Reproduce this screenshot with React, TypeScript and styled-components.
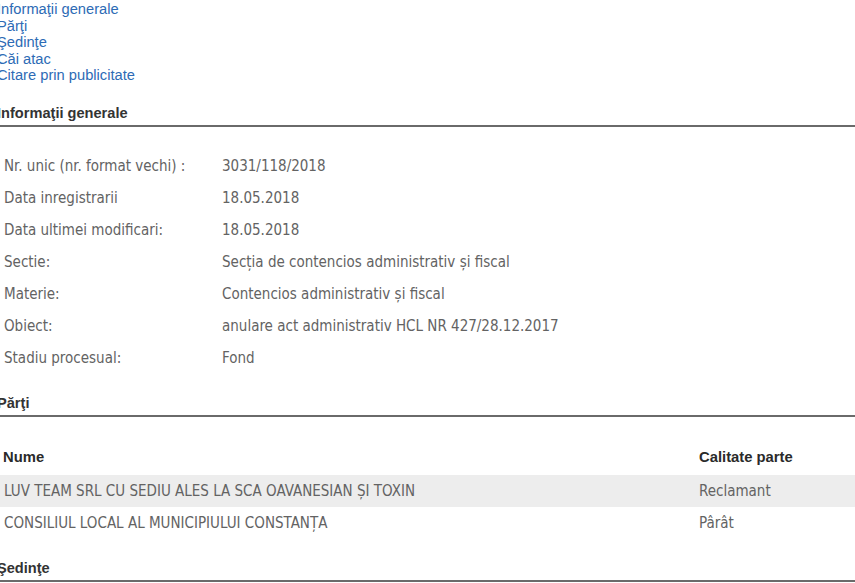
import React from "react";
import styled, { createGlobalStyle } from "styled-components";

const Global = createGlobalStyle`
  html, body { margin: 0; padding: 0; background: #fff; }
  body { font-family: "Liberation Sans", Arial, sans-serif; overflow: hidden; }
`;

const Page = styled.div`
  margin-left: -3px;
  padding-top: 1px;
  width: 860px;
`;

const Nav = styled.nav`
  display: flex;
  flex-direction: column;
`;

const NavLink = styled.a`
  font-family: "Liberation Sans", Arial, sans-serif;
  font-size: 14.7px;
  line-height: 16.5px;
  color: #2d6bb5;
  text-decoration: none;
`;

const SectionTitle = styled.h2<{ $gap: number }>`
  margin: ${(p) => p.$gap}px 0 0;
  padding: 0 0 3px;
  font-family: "Liberation Sans", Arial, sans-serif;
  font-weight: bold;
  font-size: 14.6px;
  line-height: 17px;
  color: #333;
  border-bottom: 2px solid #6a6a6a;
`;

const InfoTable = styled.div`
  margin-top: 23px;
  display: grid;
  grid-template-columns: 225px 1fr;
  grid-auto-rows: 32px;
`;

const Cell = styled.div<{ $pad?: number }>`
  display: flex;
  align-items: center;
  padding-left: ${(p) => p.$pad ?? 0}px;
  font-family: "DejaVu Sans Condensed", "DejaVu Sans", Tahoma, sans-serif;
  font-size: 15px;
  color: #636363;
  white-space: nowrap;
`;

const PartiesTable = styled.div`
  margin-top: 24px;
  display: flex;
  flex-direction: column;
`;

const Row = styled.div<{ $shade?: boolean; $h?: number }>`
  display: grid;
  grid-template-columns: 702px 1fr;
  height: ${(p) => p.$h ?? 32}px;
  background: ${(p) => (p.$shade ? "#ededed" : "transparent")};
`;

const HeadCell = styled.div<{ $pad?: number }>`
  display: flex;
  align-items: center;
  padding-left: ${(p) => p.$pad ?? 0}px;
  padding-bottom: 2px;
  font-family: "Liberation Sans", Arial, sans-serif;
  font-weight: bold;
  font-size: 14.8px;
  color: #2a2a2a;
`;

const info: [string, string][] = [
  ["Nr. unic (nr. format vechi) :", "3031/118/2018"],
  ["Data inregistrarii", "18.05.2018"],
  ["Data ultimei modificari:", "18.05.2018"],
  ["Sectie:", "Secția de contencios administrativ și fiscal"],
  ["Materie:", "Contencios administrativ și fiscal"],
  ["Obiect:", "anulare act administrativ HCL NR 427/28.12.2017"],
  ["Stadiu procesual:", "Fond"],
];

const parties: [string, string][] = [
  ["LUV TEAM SRL CU SEDIU ALES LA SCA OAVANESIAN ȘI TOXIN", "Reclamant"],
  ["CONSILIUL LOCAL AL MUNICIPIULUI CONSTANȚA", "Pârât"],
];

export default function App() {
  return (
    <>
      <Global />
      <Page>
        <Nav>
          <NavLink href="#">Informaţii generale</NavLink>
          <NavLink href="#">Părţi</NavLink>
          <NavLink href="#">Şedinţe</NavLink>
          <NavLink href="#">Căi atac</NavLink>
          <NavLink href="#">Citare prin publicitate</NavLink>
        </Nav>

        <SectionTitle $gap={21}>Informaţii generale</SectionTitle>
        <InfoTable>
          {info.map(([k, v]) => (
            <React.Fragment key={k}>
              <Cell $pad={7}>{k}</Cell>
              <Cell>{v}</Cell>
            </React.Fragment>
          ))}
        </InfoTable>

        <SectionTitle $gap={21}>Părţi</SectionTitle>
        <PartiesTable>
          <Row $h={34}>
            <HeadCell $pad={6}>Nume</HeadCell>
            <HeadCell>Calitate parte</HeadCell>
          </Row>
          {parties.map(([n, q], i) => (
            <Row key={n} $shade={i === 0}>
              <Cell $pad={7}>{n}</Cell>
              <Cell>{q}</Cell>
            </Row>
          ))}
        </PartiesTable>

        <SectionTitle $gap={21}>Şedinţe</SectionTitle>
      </Page>
    </>
  );
}
